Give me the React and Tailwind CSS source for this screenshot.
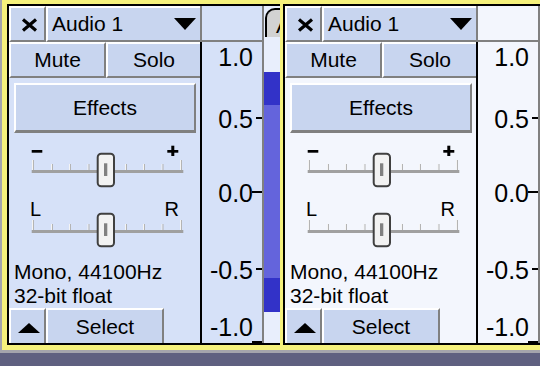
import React from "react";

const bevel =
  "border-t-2 border-l-2 border-t-white border-l-white border-r-[#808080] border-b-[#808080]";

const CloseIcon = () => (
  <svg width="17" height="14" viewBox="0 0 17 14" className="mt-[2px] block">
    <path d="M2 1.5 L15 12.5 M15 1.5 L2 12.5" stroke="#000" strokeWidth="3.2" />
  </svg>
);

const DownIcon = () => (
  <svg width="22" height="12" viewBox="0 0 22 12" className="block">
    <polygon points="0,0 22,0 11,12" fill="#000" />
  </svg>
);

const UpIcon = () => (
  <svg width="22" height="10" viewBox="0 0 22 10" className="mt-[3px] block">
    <polygon points="0,10 22,10 11,0" fill="#000" />
  </svg>
);

// slider drawing: ticks, groove and thumb (gain one also has - and +)
const Slider = ({ gain }) => {
  const ticks = [32, 51, 69, 87.5, 125, 143, 161.5, 180];
  return (
    <svg width="191" height="50" viewBox="0 0 191 50" className="block">
      {gain && (
        <>
          <rect x="22.7" y="10" width="10.6" height="2.7" fill="#000" />
          <rect x="158.3" y="10" width="11" height="2.7" fill="#000" />
          <rect x="162.3" y="5.7" width="3" height="10.3" fill="#000" />
        </>
      )}
      {ticks.map((x, i) => {
        const end = i === 0 || i === ticks.length - 1;
        return (
          <g key={x}>
            <rect x={x - 9} y={end ? 20 : 24} width="1" height={end ? 10 : 6} fill="#f4f4f4" />
            <rect x={x - 8} y={end ? 20 : 24} width="1" height={end ? 10 : 6} fill="#b4b4b4" />
          </g>
        );
      })}
      <rect x="22.7" y="30" width="151.6" height="3" fill="#a0a0a0" />
      <rect x="88.7" y="13.7" width="16.3" height="32.6" rx="3.5" fill="#f2f2f2" stroke="#404040" strokeWidth="2" />
      <rect x="95" y="23.3" width="3.3" height="12.7" fill="#808080" />
    </svg>
  );
};

const Ruler = ({ selected }) => {
  const bg = selected ? "bg-[#d6e1f8]" : "bg-[#f3f6fd]";
  return (
    <div className={`flex w-[64px] shrink-0 flex-col border-r-2 border-[#808080] ${bg}`}>
      <div className="h-[36px] border-b-2 border-l-2 border-[#808080]" />
      <div className="relative flex-1 border-l-2 border-black text-[25px] leading-[24px]">
        <span className="absolute right-[9px] top-[3px]">1.0</span>
        <span className="absolute right-[9px] top-[65px]">0.5</span>
        <span className="absolute right-[9px] top-[139px]">0.0</span>
        <span className="absolute right-[9px] top-[216px]">-0.5</span>
        <span className="absolute right-[9px] top-[273px]">-1.0</span>
        <div className="absolute right-0 top-[75px] h-[2px] w-[6px] bg-black" />
        <div className="absolute right-0 top-[149px] h-[2px] w-[10px] bg-black" />
        <div className="absolute right-0 top-[226px] h-[2px] w-[6px] bg-black" />
        <div className="absolute bottom-0 right-0 h-[2px] w-[10px] bg-black" />
      </div>
    </div>
  );
};

const Wave = () => (
  <div className="flex w-[16px] shrink-0 flex-col bg-[#e8eefc]">
    <div className="ml-[1px] mt-[2px] h-[29px] overflow-hidden whitespace-nowrap rounded-tl-[10px] border-l-2 border-t-2 border-black bg-[#d2d2d2] pl-[9px] pt-[2px] text-[21px] leading-[27px]">
      A
    </div>
    <div className="h-[35px]" />
    <div className="h-[33px] bg-[#3232c8]" />
    <div className="h-[173px] bg-[#6464dc]" />
    <div className="h-[34px] bg-[#3232c8]" />
    <div className="flex-1" />
  </div>
);

const Track = ({ selected, wave }) => {
  const panelBg = selected ? "bg-[#d6e1f8]" : "bg-[#f3f6fd]";
  const btn = "bg-[#c8d5ef]";
  return (
    <div className="flex h-full shrink-0 border-y-2 border-l-2 border-black">
      <div className={`flex w-[191px] shrink-0 flex-col ${panelBg}`}>
        <div className="flex h-[36px]">
          <div className={`flex w-[37px] items-center border-r-2 border-b-2 pl-[10px] ${bevel} ${btn}`}>
            <CloseIcon />
          </div>
          <div className={`flex flex-1 items-center justify-between border-b-2 pl-[4px] pr-[4px] ${bevel} ${btn}`}>
            <span>Audio 1</span>
            <DownIcon />
          </div>
        </div>
        <div className="flex h-[36px]">
          <div className={`flex w-[97px] items-center justify-center border-r-2 border-b-2 ${bevel} ${btn}`}>
            Mute
          </div>
          <div className={`flex flex-1 items-center justify-center border-b-2 ${bevel} ${btn}`}>
            Solo
          </div>
        </div>
        <div className={`ml-[5px] mr-[4px] mt-[5px] flex h-[50px] items-center justify-center border-r-2 border-b-[3px] ${bevel} ${btn}`}>
          Effects
        </div>
        <div className="mt-[7px]">
          <Slider gain />
        </div>
        <div className="mt-[10px] flex h-[18px] justify-between pl-[21px] pr-[21px] text-[20px] leading-[18px]">
          <span>L</span>
          <span>R</span>
        </div>
        <div className="-mt-[18px]">
          <Slider />
        </div>
        <div className="mt-[10px] pl-[5px] leading-[24px]">
          <div>Mono, 44100Hz</div>
          <div>32-bit float</div>
        </div>
        <div className="mt-auto flex h-[35px]">
          <div className={`flex w-[37px] items-center border-r-2 pl-[7px] ${bevel} ${btn}`}>
            <UpIcon />
          </div>
          <div className={`flex w-[118px] items-center justify-center border-r-2 ${bevel} ${btn}`}>
            Select
          </div>
        </div>
      </div>
      <Ruler selected={selected} />
      {wave && <Wave />}
    </div>
  );
};

export default function App() {
  return (
    <div className="flex h-[366px] w-[540px] flex-col overflow-hidden bg-[#5f6080] font-['Liberation_Sans',Arial,sans-serif] text-[21px] text-black">
      <div className="flex h-[353px] shrink-0 bg-[#a4a4ac] pb-[3px] pl-[2px]">
        <div className="flex h-[350px] min-w-0 flex-1 gap-[3px] overflow-hidden bg-[#f5f17c] pb-[5px] pl-[5px] pt-[4px]">
          <Track selected wave />
          <Track />
        </div>
      </div>
    </div>
  );
}
